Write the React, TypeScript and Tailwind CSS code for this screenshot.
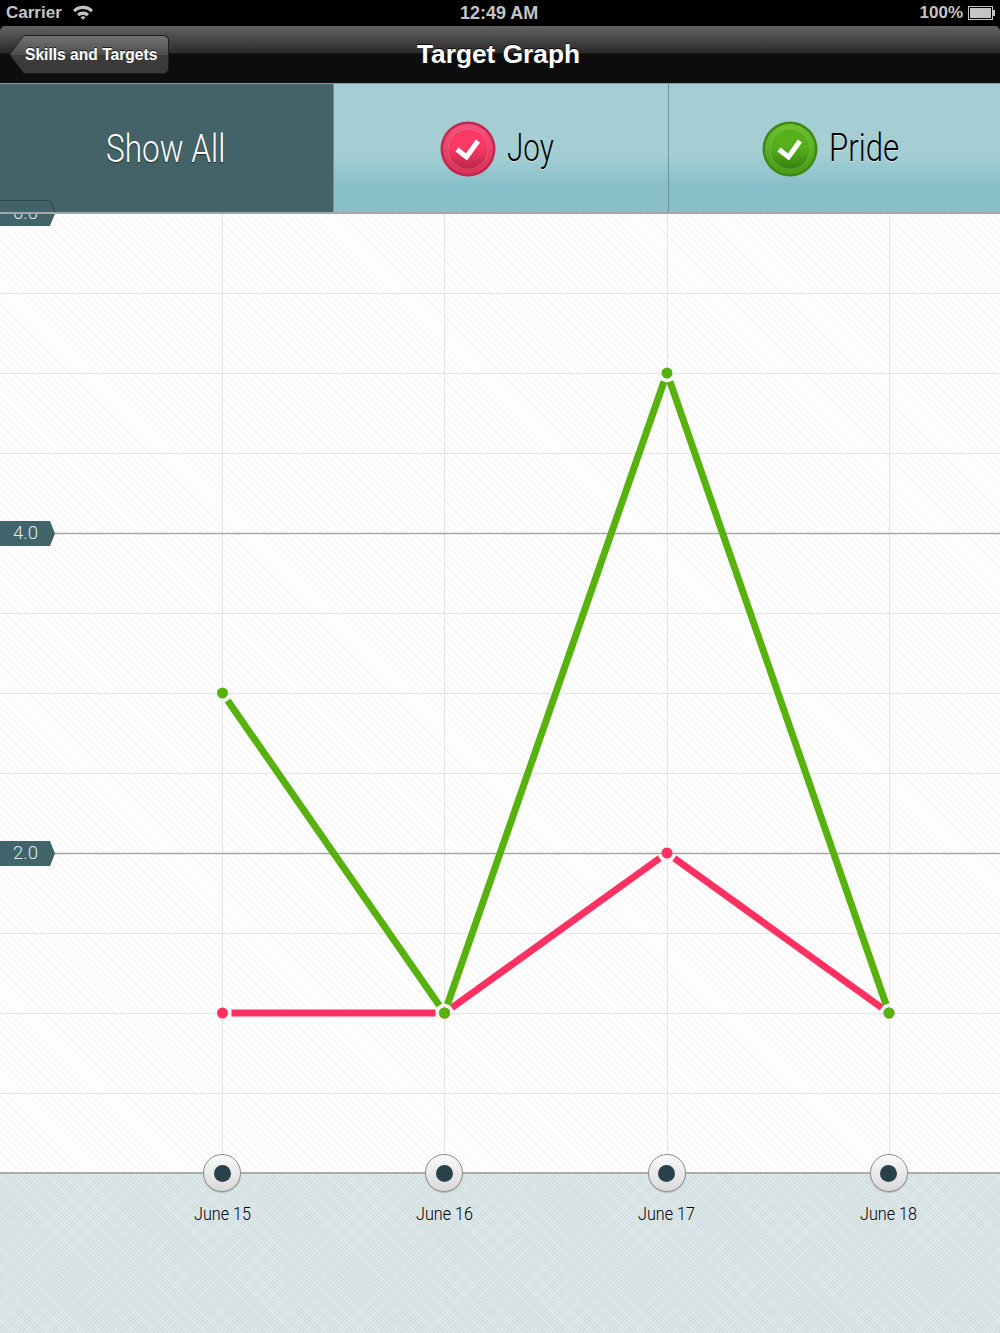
import React from "react";

// chart data in chart-local pixels (chart starts at y=214)
const X = [222.5, 444.5, 667, 889];
const CHART_TOP = 214;
const PRIDE = [693, 1013, 373, 1013].map((y) => y - CHART_TOP);
const JOY = [1013, 1013, 853, 1013].map((y) => y - CHART_TOP);
const GRID = [293, 373, 453, 613, 693, 773, 933, 1013, 1093].map((y) => y - CHART_TOP);
const MAJOR = [533, 853].map((y) => y - CHART_TOP);
const DATES = ["June 15", "June 16", "June 17", "June 18"];

const GAP = 9;

// lines stop short of the dots, leaving a small white gap
function Series({ ys, color }: { ys: number[]; color: string }) {
  return (
    <g>
      {ys.slice(1).map((y, i) => {
        const x0 = X[i];
        const y0 = ys[i];
        const x1 = X[i + 1];
        const len = Math.hypot(x1 - x0, y - y0);
        const dx = ((x1 - x0) / len) * GAP;
        const dy = ((y - y0) / len) * GAP;
        return (
          <line
            key={i}
            x1={x0 + dx}
            y1={y0 + dy}
            x2={x1 - dx}
            y2={y - dy}
            stroke={color}
            strokeWidth={7}
          />
        );
      })}
    </g>
  );
}

function Dots({ ys, color }: { ys: number[]; color: string }) {
  return (
    <g>
      {ys.map((y, i) => (
        <circle key={i} cx={X[i]} cy={y} r={5.5} fill={color} />
      ))}
    </g>
  );
}

function CheckBadge({ id, ring, band, bandEnd, top, bottom }: { id: string; ring: string; band: string; bandEnd: string; top: string; bottom: string }) {
  return (
    <svg width="56" height="56" viewBox="0 0 56 56" className="shrink-0">
      <defs>
        <linearGradient id={`${id}-outer`} x1="0" y1="0" x2="0" y2="1">
          <stop offset="0" stopColor={band} />
          <stop offset="1" stopColor={bandEnd} />
        </linearGradient>
        <linearGradient id={`${id}-inner`} x1="0" y1="0" x2="0" y2="1">
          <stop offset="0.45" stopColor={top} />
          <stop offset="1" stopColor={bottom} />
        </linearGradient>
      </defs>
      <circle cx="28" cy="28" r="27.5" fill={ring} />
      <circle cx="28" cy="28" r="25" fill={`url(#${id}-outer)`} />
      <circle cx="28" cy="28" r="20" fill={`url(#${id}-inner)`} stroke="#ffffff" strokeOpacity="0.12" strokeWidth="1" />
      <path d="M17 28.5 L26.5 36 L38 20" fill="none" stroke="#fff" strokeWidth="5" />
    </svg>
  );
}

function ValueTag({ label, className }: { label: string; className: string }) {
  return (
    <div
      className={`absolute left-0 flex h-[25px] w-[55px] items-center pl-[13px] pt-[1px] text-[18.5px] text-[#dfe9ea] bg-[#41646a] [clip-path:polygon(0_0,50px_0,55px_12.5px,50px_25px,0_25px)] [font-family:Roboto,sans-serif] font-light ${className}`}
    >
      {label}
    </div>
  );
}

export default function App() {
  return (
    <div className="flex h-[1333px] w-[1000px] flex-col overflow-hidden bg-black [font-family:'Liberation_Sans',Arial,sans-serif]">
      {/* Status bar */}
      <div className="relative flex h-[26px] shrink-0 items-center justify-between pl-[6px] pr-[5px] text-[#c4c4c4]">
        <div className="flex items-center gap-[10px] text-[17px] font-bold">
          <span>Carrier</span>
          <svg width="22" height="16" viewBox="0 0 22 16" className="-mt-[2px]">
            <path d="M1 6 A14 14 0 0 1 21 6 L18.8 8.2 A11 11 0 0 0 3.2 8.2 Z" fill="#c4c4c4" />
            <path d="M5 10 A8.5 8.5 0 0 1 17 10 L14.8 12.2 A5.5 5.5 0 0 0 7.2 12.2 Z" fill="#c4c4c4" />
            <path d="M8.6 13.4 A3.4 3.4 0 0 1 13.4 13.4 L11 15.8 Z" fill="#c4c4c4" />
          </svg>
        </div>
        <span className="absolute left-[460px] text-[18px] font-bold">12:49 AM</span>
        <div className="flex items-center gap-[5px] text-[17px] font-bold">
          <span>100%</span>
          <div className="flex items-center">
            <div className="h-[14px] w-[25px] border border-[#c4c4c4] p-[1px]">
              <div className="h-full w-full bg-[#c4c4c4]" />
            </div>
            <div className="h-[6px] w-[2px] bg-[#c4c4c4]" />
          </div>
        </div>
      </div>

      {/* Nav bar */}
      <div className="relative flex h-[57px] shrink-0 items-center justify-center rounded-t-[5px] bg-[linear-gradient(to_bottom,#626262_0%,#2a2a2a_47%,#0d0d0d_49%,#0d0d0d_100%)]">
        <div className="absolute left-[9px] top-[9px] h-[39px] w-[160px] bg-[#1c1c1c] [clip-path:polygon(15px_0,155px_0,158px_1px,160px_4px,160px_35px,158px_38px,155px_39px,15px_39px,0_19.5px)]">
          <div className="m-[1px] flex h-[37px] w-[158px] items-center pl-[15px] text-[15.6px] font-bold text-white [clip-path:polygon(14px_0,154px_0,156px_1px,158px_3px,158px_34px,156px_36px,154px_37px,14px_37px,0_18.5px)] bg-[linear-gradient(to_bottom,#737373_0%,#4e4e4e_50%,#3c3c3c_52%,#3a3a3a_100%)] [text-shadow:0_-1px_0_rgba(0,0,0,0.7)]">
            Skills and Targets
          </div>
        </div>
        <h1 className="-ml-[3px] text-[26.3px] font-bold text-white [text-shadow:0_-1px_0_rgba(0,0,0,0.8)]">
          Target Graph
        </h1>
      </div>

      {/* Filter tabs */}
      <div className="relative z-10 flex h-[131px] shrink-0 border-t border-b-2 border-t-[#7f9fa5] border-b-[#9fa8aa] bg-[#a4ced4] [font-family:Roboto,sans-serif] font-light">
        <div className="relative flex w-[333px] items-center justify-center bg-[#436368] pt-[2px] text-white">
          <span className="-ml-[1px] inline-block scale-x-[0.81] text-[39px] [text-shadow:0_1px_1px_rgba(0,0,0,0.6)]">
            Show All
          </span>
          <svg width="56" height="12" viewBox="0 0 56 12" className="absolute bottom-0 left-0">
            <path d="M0 0.5 H50 L55 12" fill="none" stroke="#2f4a4f" strokeWidth="1" />
          </svg>
        </div>
        <div className="flex w-[336px] items-center justify-center gap-[10px] border-x border-[#6f9298] bg-[linear-gradient(to_bottom,#a4ced4_0%,#a4ced4_55%,#88bfc9_80%,#88bfc9_100%)] pr-[9px] pt-[1px] text-black">
          <CheckBadge id="joy" ring="#c0284e" band="#f4547c" bandEnd="#d93259" top="#f93a66" bottom="#b92647" />
          <span className="ml-[1px] inline-block w-[47px] origin-left scale-x-[0.76] text-[39px] leading-[1.2] [text-shadow:0_1px_0_rgba(255,255,255,0.6)]">
            Joy
          </span>
        </div>
        <div className="flex flex-1 items-center justify-center gap-[10px] bg-[linear-gradient(to_bottom,#a4ced4_0%,#a4ced4_55%,#88bfc9_80%,#88bfc9_100%)] pr-[9px] pt-[1px] text-black">
          <CheckBadge id="pride" ring="#3d8a10" band="#6fc033" bandEnd="#479c18" top="#57b01b" bottom="#37800f" />
          <span className="ml-[1px] inline-block w-[69px] origin-left scale-x-[0.8] text-[39px] leading-[1.2] [text-shadow:0_1px_0_rgba(255,255,255,0.6)]">
            Pride
          </span>
        </div>
      </div>

      {/* Chart */}
      <div className="relative h-[958px] shrink-0 overflow-hidden bg-[#fdfdfd] bg-[repeating-linear-gradient(45deg,#ffffff_0px,#ffffff_3px,#f8f8f8_3px,#f8f8f8_5px)]">
        <svg width="1000" height="958" viewBox="0 0 1000 958" className="absolute inset-0">
          {GRID.map((y) => (
            <line key={y} x1="0" x2="1000" y1={y + 0.5} y2={y + 0.5} stroke="#e4e4e4" />
          ))}
          {X.map((x) => (
            <line key={x} x1={Math.floor(x) + 0.5} x2={Math.floor(x) + 0.5} y1="0" y2="958" stroke="#e4e4e4" />
          ))}
          {MAJOR.map((y) => (
            <line key={y} x1="0" x2="1000" y1={y + 0.5} y2={y + 0.5} stroke="#a3a8a8" strokeWidth="1.5" />
          ))}
          <Series ys={JOY} color="#ff3162" />
          <Series ys={PRIDE} color="#57b20f" />
          <Dots ys={JOY} color="#ff3162" />
          <Dots ys={PRIDE} color="#57b20f" />
        </svg>
        <ValueTag label="6.0" className="-top-[13px]" />
        <ValueTag label="4.0" className="top-[307px]" />
        <ValueTag label="2.0" className="top-[627px]" />
      </div>

      {/* Date axis */}
      <div className="relative flex-1 border-t-2 border-[#a9adad] bg-[#d9e4e6] bg-[repeating-linear-gradient(45deg,rgba(255,255,255,0.16)_0px,rgba(255,255,255,0.16)_1px,rgba(120,145,150,0.03)_1px,rgba(120,145,150,0.03)_3px),repeating-linear-gradient(-45deg,rgba(255,255,255,0.1)_0px,rgba(255,255,255,0.1)_1px,rgba(120,145,150,0.03)_1px,rgba(120,145,150,0.03)_3px)]">
        {DATES.map((date, i) => (
          <div
            key={date}
            className="absolute -top-[20px] flex w-[100px] -translate-x-1/2 flex-col items-center"
            style={{ left: X[i] - 0.5 }}
          >
            <div className="flex h-[38px] w-[38px] items-center justify-center rounded-full border border-[#8d8d8d] bg-[linear-gradient(to_bottom,#fafafa,#d9d9d9)] shadow-[0_1px_1px_rgba(0,0,0,0.2)]">
              <div className="h-[17px] w-[17px] rounded-full bg-[#28414a]" />
            </div>
            <span className="mt-[8px] inline-block scale-x-[0.85] whitespace-nowrap [font-family:Roboto,sans-serif] text-[19px] font-light text-[#000]">
              {date}
            </span>
          </div>
        ))}
      </div>
    </div>
  );
}
